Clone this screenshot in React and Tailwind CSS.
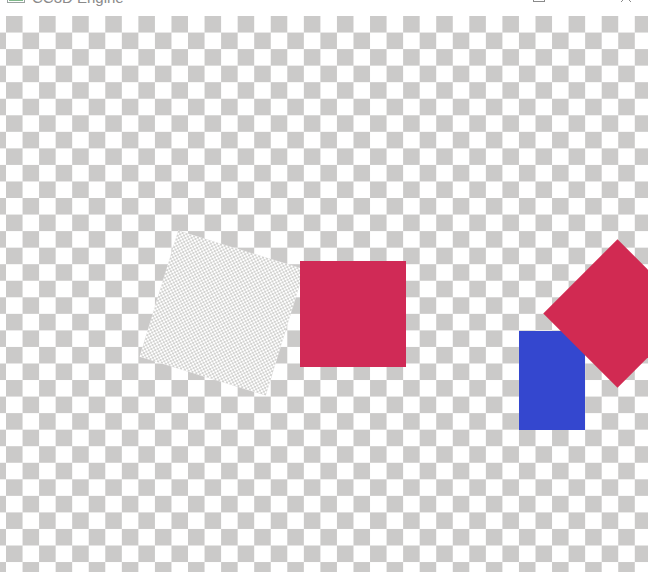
export default function App() {
  return (
    <div className="w-[648px] h-[572px] overflow-hidden bg-white flex flex-col font-['Segoe_UI','Liberation_Sans',sans-serif]">
      {/* title bar, mostly scrolled off the top */}
      <div className="h-4 shrink-0 relative overflow-hidden bg-white">
        <div className="-mt-[11px] flex items-start h-[17px]">
          <svg className="ml-[7px] mt-[-3px] w-[18px] h-[17px]" viewBox="0 0 18 17">
            <rect x="0.5" y="0.5" width="17" height="16" fill="#ffffff" stroke="#9aa2a0" />
            <rect x="2" y="13" width="14" height="2" fill="#7fb98a" />
          </svg>
          <span className="ml-[7px] text-[15px] leading-[17px] text-[#8a8a8a]">CC3D Engine</span>
          <div className="ml-auto mr-[75px] mt-[3px] w-3 h-[10px] border border-[#8a8a8a]" />
          <svg className="mr-4 mt-[2px] w-3 h-3" viewBox="0 0 12 12">
            <path d="M1 1 L11 11 M11 1 L1 11" stroke="#8a8a8a" strokeWidth="1" />
          </svg>
        </div>
      </div>

      {/* canvas */}
      <div className="flex-1 relative bg-[image:conic-gradient(#ffffff_25%,#cbcac9_0_50%,#ffffff_0_75%,#cbcac9_0)] bg-[length:33.1px_33.1px] bg-[position:6px_0px]">
        <div className="absolute left-[156px] top-[231px] w-[132px] h-[132px] rotate-[17deg] bg-[#e6e4e6] bg-[image:conic-gradient(#ffffff_25%,#d2d2d0_0_50%,#ffffff_0_75%,#d2d2d0_0)] bg-[length:4px_4px]" />
        <div className="absolute left-[300px] top-[245px] w-[106px] h-[106px] bg-[#d02a56]" />
        <div className="absolute left-[519px] top-[315px] w-[66px] h-[99px] bg-[#3447cf]" />
        <div className="absolute left-[565px] top-[245px] w-[105px] h-[105px] rotate-45 bg-[#d12a52]" />
      </div>
    </div>
  );
}
